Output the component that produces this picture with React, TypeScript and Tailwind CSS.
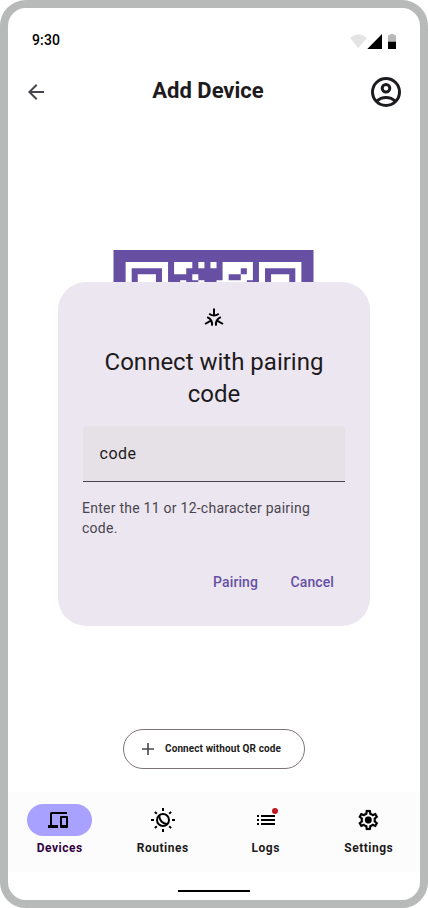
import React from "react";

// Visible rows of the QR symbol; "1" marks a white module.
const QR_ROWS = [
  "11111110111010101111101111111",
  "10000010110000001110101000001",
  "10111010000100001001101011101",
  "10111010010010011111001011101",
];

const QR_PATH = QR_ROWS.map((row, y) =>
  Array.from(row.matchAll(/1+/g))
    .map((run) => `M${(run.index ?? 0) + 2} ${y + 2}h${run[0].length}v1h-${run[0].length}z`)
    .join("")
).join("");

function QrCode() {
  return (
    <svg width="202" height="200" viewBox="-0.0825 0 33.33 33" className="block">
      <rect width="33" height="33" fill="#6750a4" />
      <path d={QR_PATH} fill="#fff" />
    </svg>
  );
}

type IconProps = { d: string; color?: string };

function Icon({ d, color = "#000" }: IconProps) {
  return (
    <svg width="24" height="24" viewBox="0 0 24 24" fill={color} className="block shrink-0">
      <path d={d} />
    </svg>
  );
}

const BACK = "M20 11H7.83l5.59-5.59L12 4l-8 8 8 8 1.41-1.41L7.83 13H20v-2z";
const PLUS = "M18 12.8h-5.2V18h-1.6v-5.2H6v-1.6h5.2V6h1.6v5.2H18z";
const LIST = "M3 13h2v-2H3v2zm0 4h2v-2H3v2zm0-8h2V7H3v2zm4 4h14v-2H7v2zm0 4h14v-2H7v2zM7 7v2h14V7H7z";
const GEAR = "M19.43 12.98c.04-.32.07-.64.07-.98 0-.34-.03-.66-.07-.98l2.11-1.65c.19-.15.24-.42.12-.64l-2-3.46c-.09-.16-.26-.25-.44-.25-.06 0-.12.01-.17.03l-2.49 1c-.52-.4-1.08-.73-1.69-.98l-.38-2.65C14.46 2.18 14.25 2 14 2h-4c-.25 0-.46.18-.49.42l-.38 2.65c-.61.25-1.17.59-1.69.98l-2.49-1c-.06-.02-.12-.03-.18-.03-.17 0-.34.09-.43.25l-2 3.46c-.13.22-.07.49.12.64l2.11 1.65c-.04.32-.07.65-.07.98 0 .33.03.66.07.98l-2.11 1.65c-.19.15-.24.42-.12.64l2 3.46c.09.16.26.25.44.25.06 0 .12-.01.17-.03l2.49-1c.52.4 1.08.73 1.69.98l.38 2.65c.03.24.24.42.49.42h4c.25 0 .46-.18.49-.42l.38-2.65c.61-.25 1.17-.59 1.69-.98l2.49 1c.06.02.12.03.18.03.17 0 .34-.09.43-.25l2-3.46c.12-.22.07-.49-.12-.64l-2.11-1.65zm-1.98-1.71c.04.31.05.52.05.73 0 .21-.02.43-.05.73l-.14 1.13.89.7 1.08.84-.7 1.21-1.27-.51-1.04-.42-.9.68c-.43.32-.84.56-1.25.73l-1.06.43-.16 1.13-.2 1.35h-1.4l-.19-1.35-.16-1.13-1.06-.43c-.43-.18-.83-.41-1.23-.71l-.91-.7-1.06.43-1.27.51-.7-1.21 1.08-.84.89-.7-.14-1.13c-.03-.31-.05-.54-.05-.74s.02-.43.05-.73l.14-1.13-.89-.7-1.08-.84.7-1.21 1.27.51 1.04.42.9-.68c.43-.32.84-.56 1.25-.73l1.06-.43.16-1.13.2-1.35h1.39l.19 1.35.16 1.13 1.06.43c.43.18.83.41 1.23.71l.91.7 1.06-.43 1.27-.51.7 1.21-1.07.85-.89.7.14 1.13z";

function DevicesIcon() {
  return (
    <svg width="25" height="24" viewBox="0 0 25 24" fillRule="evenodd" className="block">
      <path d="M1 17H3V5.5Q3 4 4.5 4H20V6H5V17H11V20H1ZM14 8H20Q21 8 21 9V19Q21 20 20 20H14Q13 20 13 19V9Q13 8 14 8ZM15 10V17H19V10Z" />
    </svg>
  );
}

function SettingsIcon() {
  return (
    <svg width="24" height="24" viewBox="-0.3 0 24 24" stroke="#000" strokeWidth="0.2" className="mr-px block">
      <path d={GEAR} />
      <circle cx="12" cy="12" r="3.4" />
    </svg>
  );
}

function StatusIcons() {
  return (
    <svg width="47" height="16" viewBox="0 0 47 16" className="block">
      <path d="M0 3.8Q8.4-3.4 16.8 3.8L8.4 14.3Z" fill="#e4e4e4" />
      <path d="M17.3 15L32 0V15Z" fill="#000" />
      <path d="M38 1.3h2V0h4v1.3h2v6.7h-8Z" fill="#b8b8b8" />
      <path d="M38 7.8h8v7.2h-8Z" fill="#000" />
    </svg>
  );
}

function AccountIcon() {
  return (
    <svg width="36" height="36" viewBox="0 0 36 36" fill="none" stroke="#1d1b20" strokeWidth="3" className="block">
      <circle cx="18" cy="18" r="13.5" />
      <circle cx="18" cy="14.3" r="3.8" />
      <path d="M8.5 27.2C14 22.1 22 22.1 27.5 27.2" />
    </svg>
  );
}

function MatterIcon() {
  return (
    <svg width="20" height="20" viewBox="0 0 20 20" fill="none" stroke="#000" strokeWidth="2" className="block">
      {[0, 120, 240].map((a) => (
        <path key={a} d="M10 .4V7.8M5.2 5.7Q10 9.3 14.8 5.7" transform={`rotate(${a} 10 10.8)`} />
      ))}
    </svg>
  );
}

function RoutinesIcon() {
  return (
    <svg width="24" height="24" viewBox="0 0 24 24" fill="none" stroke="#000" strokeWidth="2" className="block">
      <circle cx="12" cy="12" r="6" />
      <path d="M8.3 7.5C8 12 11.6 16.3 16.6 15.9" />
      {[0, 45, 90, 135, 180, 225, 270, 315].map((a) => (
        <path key={a} d={a % 90 ? "M12 .5V3.2" : "M12 0V3"} transform={`rotate(${a} 12 12)`} />
      ))}
    </svg>
  );
}

type NavProps = { label: string; active?: boolean; badge?: boolean; children: React.ReactNode };

function NavItem({ label, active, badge, children }: NavProps) {
  return (
    <button className="flex flex-1 flex-col items-center gap-1 pt-3">
      <span className={`relative flex h-8 w-[65px] items-center justify-center rounded-2xl ${active ? "bg-[#a8a1ff]" : ""}`}>
        {children}
        {badge && <span className="absolute top-1 left-[39px] size-1.5 rounded-full bg-[#c0191f]" />}
      </span>
      <span className={`pl-[0.5px] text-xs leading-4 font-bold tracking-[0.5px] ${active ? "text-[#31003f]" : "text-[#1d1b20]"}`}>{label}</span>
    </button>
  );
}

export default function App() {
  return (
    <div className="flex h-[908px] w-[428px] flex-col overflow-hidden rounded-[26px] border-8 border-[#b8bab9] bg-white font-['Roboto',sans-serif] text-[#1d1b20]">
      <div className="flex h-[52px] shrink-0 items-start justify-between pt-[22px] pr-[23px] pl-6">
        <span className="text-sm leading-5 font-medium tracking-[0.14px] text-black">9:30</span>
        <span className="pt-1"><StatusIcons /></span>
      </div>
      <header className="flex h-16 shrink-0 items-center justify-between px-4">
        <button className="flex w-9"><Icon d={BACK} color="#49454f" /></button>
        <h1 className="pr-3 pb-[3px] text-[22px] leading-7 font-bold">Add Device</h1>
        <button><AccountIcon /></button>
      </header>
      <main className="flex flex-1 flex-col items-center">
        <div className="mt-[126px] h-8 shrink-0 overflow-hidden"><QrCode /></div>
        <section className="flex h-[344px] w-[312px] shrink-0 flex-col rounded-[28px] bg-[#ece6f0] px-6 pt-6">
          <div className="flex justify-center py-0.5"><MatterIcon /></div>
          <h2 className="mt-4 text-center text-2xl leading-8">Connect with pairing<br />code</h2>
          <div className="mt-4 ml-px flex h-14 w-[262px] items-center rounded-t border-b border-[#49454f] bg-[#e6e1e6] px-[16.5px] text-base tracking-[0.5px]">code</div>
          <p className="mt-4 text-sm leading-5 tracking-[0.25px] text-[#49454f]">Enter the 11 or 12-character pairing code.</p>
          <div className="mt-[34px] flex justify-end gap-[32.5px] pr-3 text-sm leading-5 font-medium tracking-[0.1px] text-[#6750a4]">
            <button>Pairing</button>
            <button>Cancel</button>
          </div>
        </section>
        <button className="mt-[103px] flex h-10 w-[182px] shrink-0 items-center rounded-full border border-[#7c7278] pl-3">
          <Icon d={PLUS} color="#49454f" />
          <span className="ml-[5px] text-[10px] leading-5 font-bold tracking-[0.1px] whitespace-nowrap">Connect without QR code</span>
        </button>
      </main>
      <nav className="flex h-20 shrink-0 bg-[#fcfcfc]">
        <NavItem label="Devices" active><DevicesIcon /></NavItem>
        <NavItem label="Routines"><RoutinesIcon /></NavItem>
        <NavItem label="Logs" badge><Icon d={LIST} /></NavItem>
        <NavItem label="Settings"><SettingsIcon /></NavItem>
      </nav>
      <div className="flex h-7 shrink-0 justify-center pt-[18px]"><div className="h-0.5 w-[72px] bg-black" /></div>
    </div>
  );
}
